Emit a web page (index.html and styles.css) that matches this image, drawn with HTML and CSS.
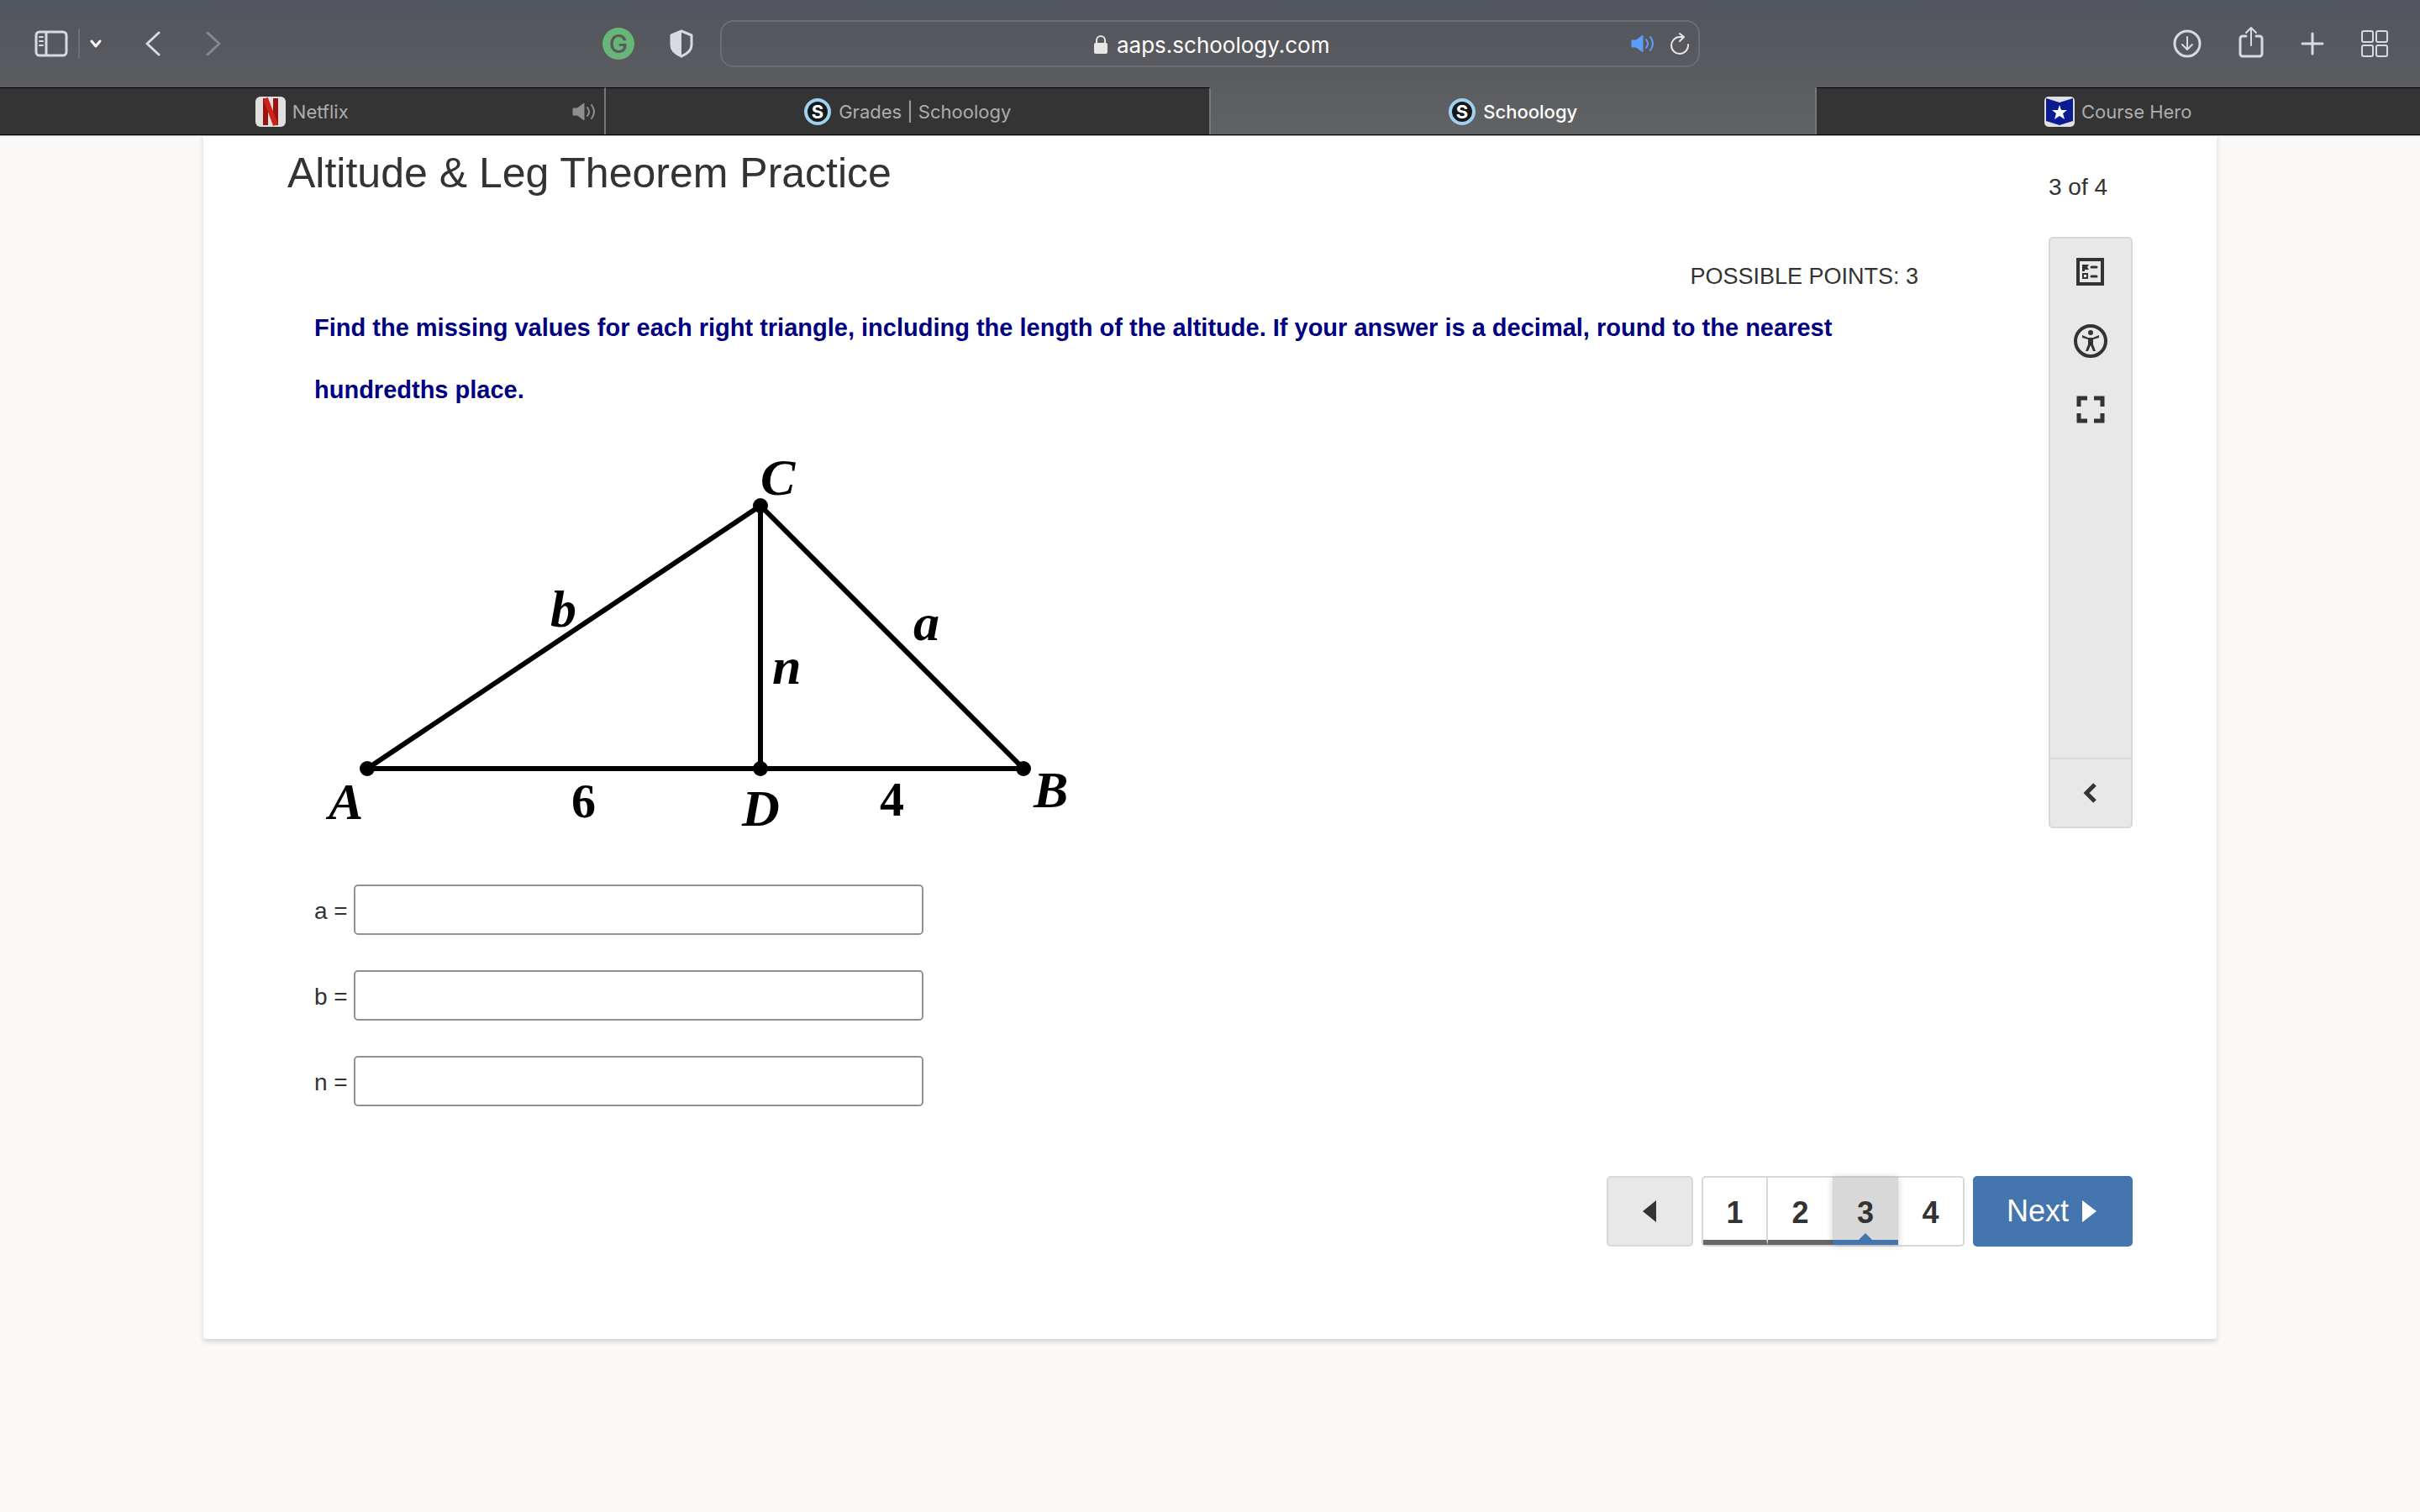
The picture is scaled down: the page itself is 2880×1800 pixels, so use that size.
FILE: index.html
```
<!DOCTYPE html>
<html lang="en">
  <head>
    <meta charset="UTF-8" />
    <meta name="viewport" content="width=device-width, initial-scale=1.0" />
    <title>Schoology</title>
    <link rel="stylesheet" href="styles.css">
  </head>
  <body>
    <header class="browser">
      <div class="toolbar">
        <div class="tools tools-left">
          <button class="tool" aria-label="Sidebar">
            <svg width="40" height="32" viewBox="0 0 40 32" fill="none" stroke="currentColor" stroke-width="3">
              <rect x="2" y="2" width="36" height="28" rx="4" />
              <path d="M14 2v28" />
              <path d="M6 8h4M6 13h4M6 18h4" stroke-width="2" stroke-linecap="round" />
            </svg>
          </button>
          <span class="divider"></span>
          <button class="tool tool-menu" aria-label="Tab groups">
            <svg width="16" height="12" viewBox="0 0 16 12" fill="none" stroke="#fff" stroke-width="3" stroke-linecap="round" stroke-linejoin="round">
              <path d="M3 3l5 6 5-6" />
            </svg>
          </button>
          <button class="tool tool-back" aria-label="Back">
            <svg width="20" height="30" viewBox="0 0 20 30" fill="none" stroke="currentColor" stroke-width="3" stroke-linecap="round" stroke-linejoin="round">
              <path d="M17 2L3 15l14 13" />
            </svg>
          </button>
          <button class="tool tool-forward" aria-label="Forward" disabled>
            <svg width="20" height="30" viewBox="0 0 20 30" fill="none" stroke="currentColor" stroke-width="3" stroke-linecap="round" stroke-linejoin="round">
              <path d="M3 2l14 13L3 28" />
            </svg>
          </button>
          <button class="tool tool-grammarly" aria-label="Grammarly">
            <svg width="38" height="38" viewBox="0 0 38 38">
              <circle cx="19" cy="19" r="19" fill="#69b578" />
              <text class="grammarly-g" x="19" y="30" text-anchor="middle">G</text>
            </svg>
          </button>
          <button class="tool tool-shield" aria-label="Privacy report">
            <svg width="28" height="34" viewBox="0 0 28 34">
              <path d="M14 2l12 5v12c0 6-5 10-12 13C7 29 2 25 2 19V7z" fill="none" stroke="currentColor" stroke-width="3" stroke-linejoin="round" />
              <path d="M14 2v30C7 29 2 25 2 19V7z" fill="currentColor" />
            </svg>
          </button>
        </div>
        <div class="address">
          <span></span>
          <div class="address-site">
            <svg width="18" height="24" viewBox="0 0 18 24">
              <rect x="1" y="10" width="16" height="13" rx="2" fill="#e6e6e6" />
              <path d="M4 11V7a5 5 0 0 1 10 0v4" fill="none" stroke="#e6e6e6" stroke-width="2" />
            </svg>
            <input class="address-input" type="text" value="aaps.schoology.com" aria-label="Address" />
          </div>
          <div class="address-actions">
            <button class="tool tool-audio" aria-label="Mute this page">
              <svg width="28" height="22" viewBox="0 0 28 22">
                <path d="M1 7h5l8-6v20l-8-6H1z" fill="currentColor" stroke="currentColor" stroke-linejoin="round" />
                <path d="M18 6q4 5 0 10M23 3q6 8 0 16" fill="none" stroke="currentColor" stroke-width="2" stroke-linecap="round" />
              </svg>
            </button>
            <button class="tool" aria-label="Reload">
              <svg width="24" height="26" viewBox="0 0 24 26" fill="none" stroke="#e6e6e6" stroke-width="2" stroke-linecap="round" stroke-linejoin="round">
                <path d="M22 14A10 10 0 1 1 12 5l4 0" />
                <path d="M12 1l5 4-5 5" />
              </svg>
            </button>
          </div>
        </div>
        <div class="tools tools-right">
          <button class="tool" aria-label="Downloads">
            <svg width="34" height="34" viewBox="0 0 34 34" fill="none" stroke="currentColor" stroke-width="3" stroke-linecap="round" stroke-linejoin="round">
              <circle cx="17" cy="17" r="15" />
              <path d="M17 9v15M11 18l6 6 6-6" stroke-width="2" />
            </svg>
          </button>
          <button class="tool tool-share" aria-label="Share">
            <svg width="30" height="38" viewBox="0 0 30 38" fill="none" stroke="currentColor" stroke-width="3" stroke-linecap="round" stroke-linejoin="round">
              <path d="M9 12H5a3 3 0 0 0-3 3v18a3 3 0 0 0 3 3h20a3 3 0 0 0 3-3V15a3 3 0 0 0-3-3h-4" />
              <path d="M15 23V2M9 8l6-6 6 6" stroke-width="2" />
            </svg>
          </button>
          <button class="tool" aria-label="New tab">
            <svg width="28" height="28" viewBox="0 0 28 28" fill="none" stroke="currentColor" stroke-width="3" stroke-linecap="round">
              <path d="M14 2v24M2 14h24" />
            </svg>
          </button>
          <button class="tool" aria-label="Tab overview">
            <svg width="32" height="32" viewBox="0 0 32 32" fill="none" stroke="currentColor" stroke-width="2">
              <rect x="1" y="1" width="13" height="13" rx="2" />
              <rect x="18" y="1" width="13" height="13" rx="2" />
              <rect x="1" y="18" width="13" height="13" rx="2" />
              <rect x="18" y="18" width="13" height="13" rx="2" />
            </svg>
          </button>
        </div>
      </div>

      <nav class="tabs">
        <a class="tab" href="#">
          <svg width="36" height="36" viewBox="0 0 36 36">
            <rect width="36" height="36" rx="6" fill="#e0e0e0" />
            <rect x="9" y="2" width="6" height="32" fill="#98150f" />
            <rect x="21" y="2" width="6" height="32" fill="#98150f" />
            <path d="M12 2l12 32" stroke="#cd2418" stroke-width="6" />
          </svg>
          Netflix
          <span class="tab-audio">
            <svg width="28" height="22" viewBox="0 0 28 22">
              <path d="M1 7h5l8-6v20l-8-6H1z" fill="currentColor" stroke="currentColor" stroke-linejoin="round" />
              <path d="M18 6q4 5 0 10M23 3q6 8 0 16" fill="none" stroke="currentColor" stroke-width="2" stroke-linecap="round" />
            </svg>
          </span>
        </a>
        <a class="tab" href="#">
          <svg width="34" height="34" viewBox="0 0 34 34">
            <circle cx="17" cy="17" r="14" fill="#16191b" stroke="#9fd0ee" stroke-width="4" />
            <text class="schoology-s" x="17" y="25" text-anchor="middle">S</text>
          </svg>
          Grades | Schoology
        </a>
        <a class="tab tab-active" href="#">
          <svg width="34" height="34" viewBox="0 0 34 34">
            <circle cx="17" cy="17" r="14" fill="#16191b" stroke="#9fd0ee" stroke-width="4" />
            <text class="schoology-s" x="17" y="25" text-anchor="middle">S</text>
          </svg>
          Schoology
        </a>
        <a class="tab" href="#">
          <svg width="36" height="36" viewBox="0 0 36 36">
            <rect width="36" height="36" rx="5" fill="#e0e0e0" />
            <path d="M2 2l16 5 16-5v27l-16 5-16-5z" fill="#0b1b92" />
            <path d="M18 10l2 6h7l-5 4 2 7-6-4-6 4 2-7-5-4h7z" fill="#fff" />
          </svg>
          Course Hero
        </a>
      </nav>
    </header>

    <main class="card">
      <section class="assessment">
        <h1 class="title">Altitude &amp; Leg Theorem Practice</h1>
        <div class="question">
          <p class="points">POSSIBLE POINTS: 3</p>
          <p class="prompt">Find the missing values for each right triangle, including the length of the altitude. If your answer is a decimal, round to the nearest hundredths place.</p>
          <svg class="diagram" width="940" height="480" viewBox="0 0 940 480" role="img" aria-label="Right triangle ABC with altitude CD">
            <path d="M63 394L531 81L844 394ZM531 81V394" fill="none" stroke="#000" stroke-width="6" stroke-linejoin="round" />
            <circle cx="63" cy="394" r="9" />
            <circle cx="531" cy="81" r="9" />
            <circle cx="531" cy="394" r="9" />
            <circle cx="844" cy="394" r="9" />
            <text x="531" y="68">C</text>
            <text x="281" y="225">b</text>
            <text x="713" y="241">a</text>
            <text x="545" y="293">n</text>
            <text x="17" y="454">A</text>
            <text x="509" y="462">D</text>
            <text x="856" y="440">B</text>
            <text class="number" x="306" y="452">6</text>
            <text class="number" x="673" y="450">4</text>
          </svg>
          <form class="answers">
            <div class="answer">
              <label for="answer-a">a =</label>
              <input id="answer-a" type="text" />
            </div>
            <div class="answer">
              <label for="answer-b">b =</label>
              <input id="answer-b" type="text" />
            </div>
            <div class="answer">
              <label for="answer-n">n =</label>
              <input id="answer-n" type="text" />
            </div>
          </form>
        </div>
      </section>

      <aside class="side">
        <p class="count">3 of 4</p>
        <div class="side-panel">
          <div class="side-tools">
            <button class="side-button" aria-label="Review">
              <svg width="40" height="40" viewBox="0 0 40 40" fill="none" stroke="currentColor">
                <rect x="5" y="5" width="29" height="29" stroke-width="4" />
                <path d="M10 11h8l-2 3 2 3h-5v2h-3z" fill="currentColor" stroke="none" />
                <rect x="11" y="22" width="5" height="5" stroke-width="2" />
                <path d="M21 14h6M21 25h6" stroke-width="3" stroke-linecap="round" />
              </svg>
            </button>
            <button class="side-button" aria-label="Accessibility">
              <svg width="40" height="40" viewBox="0 0 40 40" fill="none" stroke="currentColor">
                <circle cx="20" cy="20" r="18" stroke-width="4" />
                <circle cx="20" cy="10" r="3" fill="currentColor" stroke="none" />
                <path d="M10 13l7 3h6l7-3v3l-7 2v6l3 8h-3l-3-7-3 7h-3l3-8v-6l-7-2z" fill="currentColor" stroke="none" />
              </svg>
            </button>
            <button class="side-button" aria-label="Full screen">
              <svg width="40" height="40" viewBox="0 0 40 40" fill="none" stroke="currentColor" stroke-width="5">
                <path d="M16 6H6v10M24 6h10v10M6 24v9h10M34 24v9H24" />
              </svg>
            </button>
          </div>
          <button class="side-collapse" aria-label="Expand panel">
            <svg width="18" height="24" viewBox="0 0 18 24" fill="none" stroke="currentColor" stroke-width="5">
              <path d="M14 2L4 12l10 10" />
            </svg>
          </button>
        </div>
      </aside>

      <nav class="pager">
        <button class="pager-prev" aria-label="Previous">
          <svg width="18" height="26" viewBox="0 0 18 26"><path d="M16 0v26L0 13z" fill="currentColor" /></svg>
        </button>
        <div class="pages">
          <a class="page page-done" href="#">1</a>
          <a class="page page-done" href="#">2</a>
          <a class="page page-current" href="#">3</a>
          <a class="page" href="#">4</a>
        </div>
        <button class="pager-next">
          Next
          <svg width="20" height="26" viewBox="0 0 20 26"><path d="M0 0l17 13L0 26z" fill="currentColor" /></svg>
        </button>
      </nav>
    </main>
  </body>
</html>
```
FILE: styles.css
```
* {
  box-sizing: border-box;
}

body {
  min-height: 100vh;
  margin: 0;
  background-color: #faf9f7;
  color: #333333;
  font-family: "Liberation Sans", Arial, sans-serif;
  font-size: 28px;
  line-height: 32px;
}

h1,
p {
  margin: 0;
}

button {
  padding: 0;
  border: 0;
  background: none;
  color: inherit;
  font: inherit;
}

svg {
  display: block;
  flex: none;
}

/* browser */
.browser {
  background: linear-gradient(#52565f, #56585e 30%, #606264);
  border-bottom: 1px solid #b4b4b4;
  color: #d8dae0;
  font-family: Inter, sans-serif;
}

.toolbar {
  display: grid;
  grid-template-columns: 1fr minmax(400px, 1166px) 1fr;
  align-items: center;
  height: 104px;
}

.tools {
  display: flex;
  align-items: center;
}

.tools-left {
  padding: 0 32px 0 41px;
}

.tools-right {
  justify-content: flex-end;
  gap: 44px;
  padding-right: 38px;
}

.divider {
  width: 2px;
  height: 36px;
  margin: 0 11px 0 12px;
  background-color: #6c6e72;
}

.tool-back {
  margin-left: 50px;
}

.tool-forward {
  margin-left: 52px;
  color: #85878b;
}

.tool-grammarly {
  margin: 0 42px 0 auto;
}

.tool-share svg {
  margin-bottom: 4px;
}

.grammarly-g {
  fill: #565b5e;
  font-size: 30px;
  font-weight: 500;
}

.address {
  display: grid;
  grid-template-columns: 1fr auto 1fr;
  align-items: center;
  height: 56px;
  padding: 0 10px;
  border: 2px solid #6b6d70;
  border-radius: 16px;
}

.address-site {
  display: flex;
  align-items: center;
  gap: 10px;
  padding: 2px 0 0 6px;
}

.address-input {
  width: 256px;
  padding: 0;
  border: 0;
  background: none;
  color: #ffffff;
  font-family: inherit;
  font-size: 26px;
}

.address-actions {
  display: flex;
  justify-content: flex-end;
  align-items: center;
  gap: 18px;
}

.tool-audio {
  color: #5b9dfb;
}

.tabs {
  display: flex;
  height: 57px;
  border-bottom: 1px solid #000000;
}

.tab {
  position: relative;
  display: flex;
  flex: 1;
  justify-content: center;
  align-items: center;
  gap: 8px;
  border-top: 1px solid #000000;
  border-right: 2px solid #77787a;
  background-color: #343435;
  color: #adadad;
  font-size: 22px;
  text-decoration: none;
}

.tab:last-child {
  border-right: 0;
}

.tab-active {
  border-top-color: transparent;
  background: none;
  color: #ffffff;
  font-weight: 500;
}

.tab-audio {
  position: absolute;
  right: 10px;
  color: #8f8f8f;
}

.schoology-s {
  fill: #ffffff;
  font-size: 22px;
  font-weight: 700;
}

/* assessment */
.card {
  display: grid;
  grid-template-columns: 1fr 100px;
  margin: 0 242px;
  padding: 0 100px 110px;
  border-radius: 0 0 4px 4px;
  background-color: #ffffff;
  box-shadow: 0 3px 6px rgba(0, 0, 0, 0.16);
}

.assessment {
  padding-top: 14px;
}

.title {
  font-size: 50px;
  font-weight: 400;
  line-height: 60px;
}

.question {
  padding: 77px 155px 0 32px;
}

.points {
  font-size: 27px;
  text-align: right;
}

.prompt {
  margin: 8px 0 20px;
  padding-right: 80px;
  color: #000080;
  font-size: 29px;
  font-weight: 700;
  line-height: 74px;
}

.diagram text {
  font-family: "Liberation Serif", "Times New Roman", serif;
  font-size: 62px;
  font-style: italic;
  font-weight: 700;
}

.diagram .number {
  font-size: 58px;
  font-style: normal;
}

.answers {
  display: flex;
  flex-direction: column;
  gap: 42px;
  margin-top: 52px;
}

.answer {
  display: flex;
  align-items: center;
  gap: 7px;
}

.answer label {
  padding-top: 3px;
}

.answer input {
  width: 678px;
  height: 60px;
  padding: 0 12px;
  border: 2px solid #929292;
  border-radius: 5px;
  background-color: #ffffff;
  font: inherit;
}

.side {
  padding-top: 45px;
}

.count {
  margin-bottom: 43px;
}

.side-panel {
  border: 2px solid #d8d8d8;
  border-radius: 5px;
  background-color: #e8e8e8;
}

.side-tools {
  display: flex;
  flex-direction: column;
  gap: 2px;
  min-height: 618px;
}

.side-button {
  display: grid;
  place-items: center;
  height: 80px;
}

.side-collapse {
  display: grid;
  place-items: center;
  width: 100%;
  height: 82px;
  border-top: 2px solid #d8d8d8;
}

/* pager */
.pager {
  display: flex;
  grid-column: 1 / -1;
  justify-content: flex-end;
  gap: 10px;
  height: 84px;
  margin-top: 83px;
  font-size: 36px;
}

.pager-prev {
  display: grid;
  place-items: center;
  width: 103px;
  border: 2px solid #d8d8d8;
  border-radius: 5px;
  background-color: #e8e8e8;
}

.pages {
  display: flex;
  border: 2px solid #d8d8d8;
  border-radius: 5px;
}

.page {
  display: grid;
  place-items: center;
  width: 77px;
  padding-top: 3px;
  color: #333333;
  font-weight: 700;
  text-decoration: none;
}

.page-done {
  border-bottom: 6px solid #686868;
  padding-top: 9px;
}

.page-done:first-child {
  border-right: 2px solid #d8d8d8;
}

.page-current {
  position: relative;
  width: 78px;
  padding-top: 9px;
  border-bottom: 6px solid #4575ae;
  background-color: #d8d8d8;
  box-shadow: 0 0 8px rgba(0, 0, 0, 0.2);
}

.page-current::after {
  content: "";
  position: absolute;
  bottom: 0;
  left: 31px;
  border: 8px solid transparent;
  border-top: 0;
  border-bottom-color: #4575ae;
}

.pager-next {
  display: flex;
  justify-content: center;
  align-items: center;
  gap: 16px;
  width: 190px;
  border-radius: 5px;
  background-color: #4575ae;
  color: #ffffff;
}
```
